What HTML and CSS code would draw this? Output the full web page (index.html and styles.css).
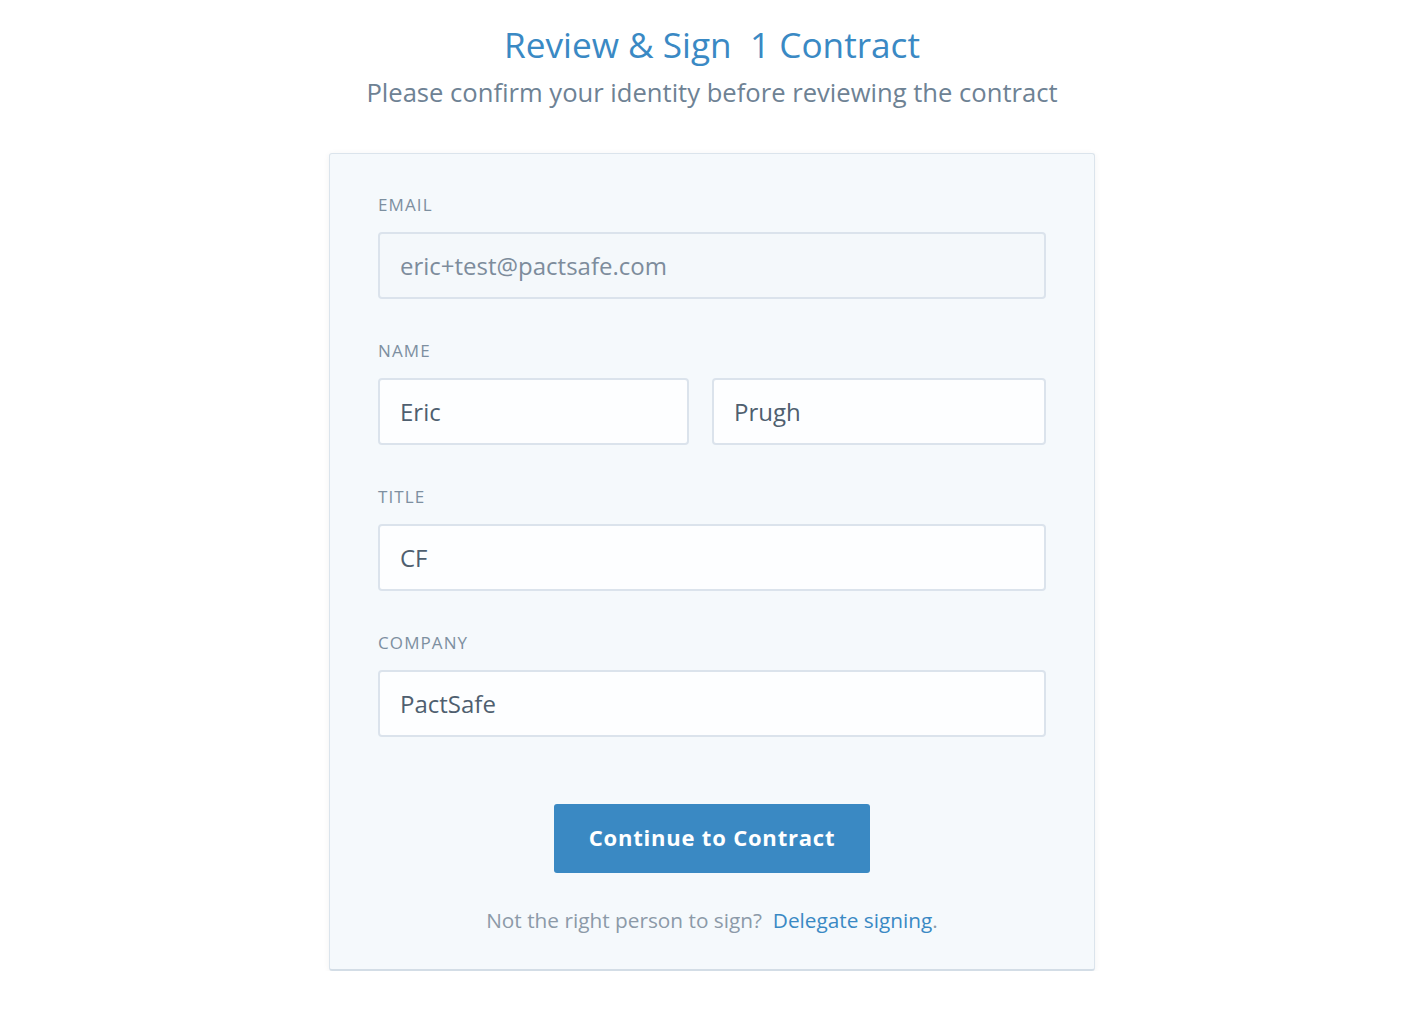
FILE: index.html
```html
<!DOCTYPE html>
<html lang="en">
<head>
    <meta charset="UTF-8">
    <meta name="viewport" content="width=device-width, initial-scale=1.0">
    <title>Review &amp; Sign</title>
    <link rel="stylesheet" href="styles.css">
</head>
<body>
    <div class="page">
        <h1 class="page-title">Review &amp; Sign&nbsp; 1 Contract</h1>
        <p class="page-subtitle">Please confirm your identity before reviewing the contract</p>

        <form class="identity-card" id="identityForm">
            <div class="field">
                <label for="email">EMAIL</label>
                <input type="text" id="email" class="input input-disabled" value="eric+test@pactsafe.com" readonly>
            </div>

            <div class="field">
                <label for="firstName">NAME</label>
                <div class="name-row">
                    <input type="text" id="firstName" class="input" value="Eric">
                    <input type="text" id="lastName" class="input" value="Prugh">
                </div>
            </div>

            <div class="field">
                <label for="title">TITLE</label>
                <input type="text" id="title" class="input" value="CF">
            </div>

            <div class="field">
                <label for="company">COMPANY</label>
                <input type="text" id="company" class="input" value="PactSafe">
            </div>

            <div class="actions">
                <button type="submit" class="continue-button">Continue to Contract</button>
                <p class="delegate">Not the right person to sign?&nbsp; <a href="#">Delegate signing</a>.</p>
            </div>
        </form>
    </div>
</body>
</html>
```

FILE: styles.css
```css
body {
    font-family: "Open Sans", "Noto Sans", sans-serif;
    background-color: #ffffff;
    margin: 0;
    padding: 0;
}
.page {
    display: flex;
    flex-direction: column;
    align-items: center;
    padding-top: 23px;
    padding-left: 10px;
}
.page-title {
    margin: 0;
    font-size: 35.2px;
    line-height: 42px;
    font-weight: 400;
    color: #3a89c4;
}
.page-subtitle {
    margin: 11px 0 0;
    font-size: 25.6px;
    line-height: 34px;
    color: #6e8294;
}
.identity-card {
    box-sizing: border-box;
    width: 766px;
    margin-top: 43px;
    padding: 41px 48px 36px;
    background: #f5f9fc;
    border: 1px solid #dbe4ec;
    border-bottom: 2px solid #d3dde6;
    border-radius: 3px;
    box-shadow: 0 1px 6px rgba(0, 0, 0, 0.06);
}
.field {
    margin-bottom: 42px;
}
.field label {
    display: block;
    font-size: 17px;
    line-height: 20px;
    letter-spacing: 1.1px;
    color: #7d8fa0;
    margin-bottom: 17px;
}
.input {
    box-sizing: border-box;
    width: 100%;
    height: 67px;
    padding: 0 20px;
    border: 2px solid #dbe3ec;
    border-radius: 4px;
    background: #fdfeff;
    font-family: inherit;
    font-size: 24px;
    color: #4f5f6f;
    outline: none;
}
.input-disabled {
    background: #f4f8fb;
    color: #7d8c9c;
}
.name-row {
    display: grid;
    grid-template-columns: 311fr 334fr;
    gap: 23px;
}
.actions {
    display: flex;
    flex-direction: column;
    align-items: center;
    padding-top: 25px;
}
.continue-button {
    width: 316px;
    height: 69px;
    padding: 0 0 3px;
    border: none;
    border-radius: 3px;
    background-color: #3a89c3;
    color: #ffffff;
    font-family: inherit;
    font-size: 22px;
    font-weight: 700;
    letter-spacing: 0.8px;
    cursor: pointer;
}
.continue-button:hover {
    background-color: #2f78ae;
}
.delegate {
    margin: 34px 0 0;
    font-size: 20.8px;
    line-height: 26px;
    color: #8c9aa8;
}
.delegate a {
    color: #3a89c4;
    text-decoration: none;
}
```
